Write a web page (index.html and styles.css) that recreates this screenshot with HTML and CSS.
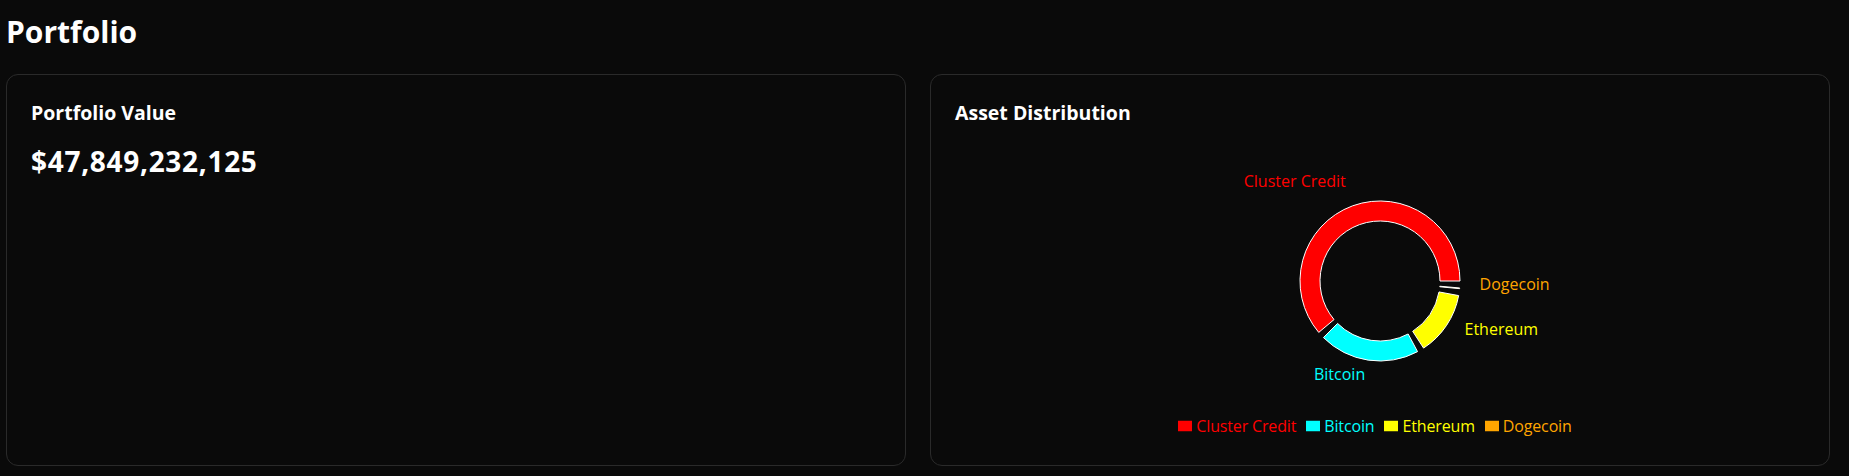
FILE: index.html
```html
<!DOCTYPE html>
<html lang="en">
<head>
<meta charset="utf-8">
<title>Portfolio</title>
<link rel="stylesheet" href="styles.css">
</head>
<body>
<main class="page">
  <h1 class="page-title">Portfolio</h1>
  <div class="cards">
    <section class="card">
      <h2 class="card-title">Portfolio Value</h2>
      <div class="value">$47,849,232,125</div>
    </section>
    <section class="card">
      <h2 class="card-title">Asset Distribution</h2>
      <div class="chart">
        <svg class="donut" width="850" height="289" viewBox="0 0 850 289">
          <g class="sectors">
            <path class="f-red" d="M505,154 A80,80 0 1 0 363.72,205.42 L379.04,192.57 A60,60 0 1 1 485,154 Z"/>
            <path class="f-cyan" d="M368.43,210.57 A80,80 0 0 0 462.56,224.64 L453.17,206.98 A60,60 0 0 1 382.57,196.43 Z"/>
            <path class="f-yellow" d="M468.57,221.09 A80,80 0 0 0 503.66,168.58 L484.00,164.93 A60,60 0 0 1 457.68,204.32 Z"/>
            <path class="f-orange" d="M504.63,161.67 A80,80 0 0 0 504.70,160.97 L484.77,159.23 A60,60 0 0 1 484.72,159.75 Z"/>
          </g>
          <text class="label f-red" x="390.8" y="60" text-anchor="end">Cluster Credit</text>
          <text class="label f-cyan" x="410.2" y="253" text-anchor="end">Bitcoin</text>
          <text class="label f-yellow" x="509.5" y="207.5" text-anchor="start">Ethereum</text>
          <text class="label f-orange" x="524.6" y="163" text-anchor="start">Dogecoin</text>
        </svg>
        <ul class="legend">
          <li class="legend-item t-red"><svg class="legend-icon" width="14" height="14" viewBox="0 0 32 32"><path class="f-red" d="M0,4h32v24h-32z"/></svg><span>Cluster Credit</span></li>
          <li class="legend-item t-cyan"><svg class="legend-icon" width="14" height="14" viewBox="0 0 32 32"><path class="f-cyan" d="M0,4h32v24h-32z"/></svg><span>Bitcoin</span></li>
          <li class="legend-item t-yellow"><svg class="legend-icon" width="14" height="14" viewBox="0 0 32 32"><path class="f-yellow" d="M0,4h32v24h-32z"/></svg><span>Ethereum</span></li>
          <li class="legend-item t-orange"><svg class="legend-icon" width="14" height="14" viewBox="0 0 32 32"><path class="f-orange" d="M0,4h32v24h-32z"/></svg><span>Dogecoin</span></li>
        </ul>
      </div>
    </section>
  </div>
</main>
</body>
</html>
```
FILE: styles.css
```css
* { box-sizing: border-box; }

html, body {
  margin: 0;
  background: #0a0a0a;
  color: #ffffff;
  font-family: "Open Sans", "Noto Sans", sans-serif;
}

.page {
  padding: 14px 19px 0 6px;
}

.page-title {
  margin: 0 0 24px 0;
  font-size: 30px;
  line-height: 36px;
  font-weight: 700;
}

.cards {
  display: grid;
  grid-template-columns: 1fr 1fr;
  gap: 24px;
}

.card {
  border: 1px solid #2a2a2a;
  border-radius: 12px;
  padding: 24px;
  display: flex;
  flex-direction: column;
}

.card-title {
  margin: 0;
  font-size: 19.5px;
  line-height: 28px;
  font-weight: 700;
}

.value {
  margin-top: 16px;
  font-size: 28px;
  line-height: 36px;
  font-weight: 700;
  letter-spacing: 0.7px;
}

.chart {
  height: 314px;
  display: flex;
  flex-direction: column;
}

.donut {
  display: block;
  width: 100%;
  height: 289px;
}

.sectors path {
  stroke: #ffffff;
  stroke-width: 1;
}

.label {
  font-family: "Open Sans", "Noto Sans", sans-serif;
  font-size: 16px;
}

.f-red { fill: #ff0000; }
.f-cyan { fill: #00ffff; }
.f-yellow { fill: #ffff00; }
.f-orange { fill: #ffa500; }

.t-red { color: #ff0000; }
.t-cyan { color: #00ffff; }
.t-yellow { color: #ffff00; }
.t-orange { color: #ffa500; }

.legend {
  list-style: none;
  margin: 0;
  padding: 0;
  display: flex;
  justify-content: center;
  font-size: 16px;
  line-height: 20px;
  height: 20px;
  letter-spacing: -0.15px;
}

.legend-item {
  display: flex;
  align-items: center;
  margin-right: 10px;
}

.legend-icon {
  display: block;
  margin-right: 4px;
}
```
